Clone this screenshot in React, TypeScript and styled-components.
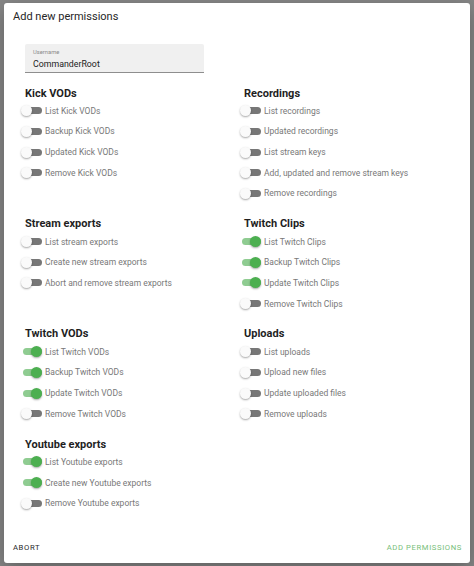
import React from "react";
import styled, { createGlobalStyle } from "styled-components";

const Global = createGlobalStyle`
  html, body { margin: 0; padding: 0; background: #878787; }
  body { font-family: Roboto, "Noto Sans", Arial, sans-serif; }
  * { box-sizing: border-box; }
`;

const Page = styled.div`
  width: 474px;
  height: 566px;
  padding: 3px 4px 4px;
  background: #878787;
`;

const Card = styled.div`
  width: 466px;
  background: #fff;
  border-radius: 3px;
  box-shadow: 0 6px 20px rgba(0, 0, 0, 0.3);
  display: flex;
  flex-direction: column;
`;

const Title = styled.h2`
  margin: 0;
  padding: 4.5px 9px 0;
  font-size: 11px;
  line-height: 17px;
  font-weight: 400;
  color: #262626;
`;

const Content = styled.div`
  padding: 19.5px 0 0 21px;
`;

const Field = styled.div`
  width: 179px;
  height: 29px;
  background: #f0f0f0;
  border-bottom: 1px solid #8e8e8e;
  border-radius: 2px 2px 0 0;
  padding: 4px 0 0 8px;
  display: flex;
  flex-direction: column;
`;

const FieldLabel = styled.span`
  font-size: 5.8px;
  line-height: 8px;
  color: #8a8a8a;
`;

const FieldValue = styled.span`
  font-size: 8.8px;
  line-height: 16px;
  color: #222;
`;

const Grid = styled.div`
  margin-top: 12.5px;
  display: grid;
  grid-template-columns: 219px 219px;
  row-gap: 12.5px;
`;

const Section = styled.div`
  display: flex;
  flex-direction: column;
`;

const Heading = styled.h3`
  margin: 0;
  font-size: 11px;
  line-height: 15px;
  font-weight: 700;
  color: #1f1f1f;
`;

const Row = styled.label`
  height: 20.67px;
  display: flex;
  align-items: center;
  margin-left: -5px;
`;

const SwitchBox = styled.span`
  position: relative;
  width: 23px;
  height: 11px;
  flex: none;
`;

const Track = styled.span<{ $on: boolean }>`
  position: absolute;
  left: 2.5px;
  top: 2px;
  width: 19px;
  height: 7px;
  border-radius: 4px;
  background: ${(p) => (p.$on ? "#8fcc91" : "#777")};
`;

const Thumb = styled.span<{ $on: boolean }>`
  position: absolute;
  top: 0;
  left: ${(p) => (p.$on ? "11px" : "0.5px")};
  width: 11px;
  height: 11px;
  border-radius: 50%;
  background: ${(p) => (p.$on ? "#4caf50" : "#fafafa")};
  box-shadow: 0 1px 2px rgba(0, 0, 0, 0.35);
`;

const RowText = styled.span`
  margin-left: 2px;
  font-size: 8.5px;
  color: #787878;
  white-space: nowrap;
`;

const Footer = styled.div`
  margin-top: 24px;
  padding: 0 8px 4.5px 9px;
  height: 25px;
  display: flex;
  justify-content: space-between;
  align-items: flex-start;
`;

const FooterButton = styled.button<{ $primary?: boolean }>`
  border: none;
  background: none;
  padding: 0;
  height: 20.5px;
  font-family: Roboto, Arial, sans-serif;
  font-size: 7.7px;
  font-weight: 400;
  letter-spacing: 0.6px;
  color: ${(p) => (p.$primary ? "#77c079" : "#2a2a2a")};
  cursor: pointer;
`;

type Perm = { label: string; on?: boolean };
type Group = { title: string; items: Perm[] };

const groups: Group[] = [
  {
    title: "Kick VODs",
    items: [
      { label: "List Kick VODs" },
      { label: "Backup Kick VODs" },
      { label: "Updated Kick VODs" },
      { label: "Remove Kick VODs" },
    ],
  },
  {
    title: "Recordings",
    items: [
      { label: "List recordings" },
      { label: "Updated recordings" },
      { label: "List stream keys" },
      { label: "Add, updated and remove stream keys" },
      { label: "Remove recordings" },
    ],
  },
  {
    title: "Stream exports",
    items: [
      { label: "List stream exports" },
      { label: "Create new stream exports" },
      { label: "Abort and remove stream exports" },
    ],
  },
  {
    title: "Twitch Clips",
    items: [
      { label: "List Twitch Clips", on: true },
      { label: "Backup Twitch Clips", on: true },
      { label: "Update Twitch Clips", on: true },
      { label: "Remove Twitch Clips" },
    ],
  },
  {
    title: "Twitch VODs",
    items: [
      { label: "List Twitch VODs", on: true },
      { label: "Backup Twitch VODs", on: true },
      { label: "Update Twitch VODs", on: true },
      { label: "Remove Twitch VODs" },
    ],
  },
  {
    title: "Uploads",
    items: [
      { label: "List uploads" },
      { label: "Upload new files" },
      { label: "Update uploaded files" },
      { label: "Remove uploads" },
    ],
  },
  {
    title: "Youtube exports",
    items: [
      { label: "List Youtube exports", on: true },
      { label: "Create new Youtube exports", on: true },
      { label: "Remove Youtube exports" },
    ],
  },
];

const Toggle = ({ on }: { on: boolean }) => (
  <SwitchBox>
    <Track $on={on} />
    <Thumb $on={on} />
  </SwitchBox>
);

export default function App() {
  return (
    <>
      <Global />
      <Page>
        <Card>
          <Title>Add new permissions</Title>
          <Content>
            <Field>
              <FieldLabel>Username</FieldLabel>
              <FieldValue>CommanderRoot</FieldValue>
            </Field>
            <Grid>
              {groups.map((g) => (
                <Section key={g.title}>
                  <Heading>{g.title}</Heading>
                  {g.items.map((it) => (
                    <Row key={it.label}>
                      <Toggle on={!!it.on} />
                      <RowText>{it.label}</RowText>
                    </Row>
                  ))}
                </Section>
              ))}
            </Grid>
          </Content>
          <Footer>
            <FooterButton>ABORT</FooterButton>
            <FooterButton $primary>ADD PERMISSIONS</FooterButton>
          </Footer>
        </Card>
      </Page>
    </>
  );
}
